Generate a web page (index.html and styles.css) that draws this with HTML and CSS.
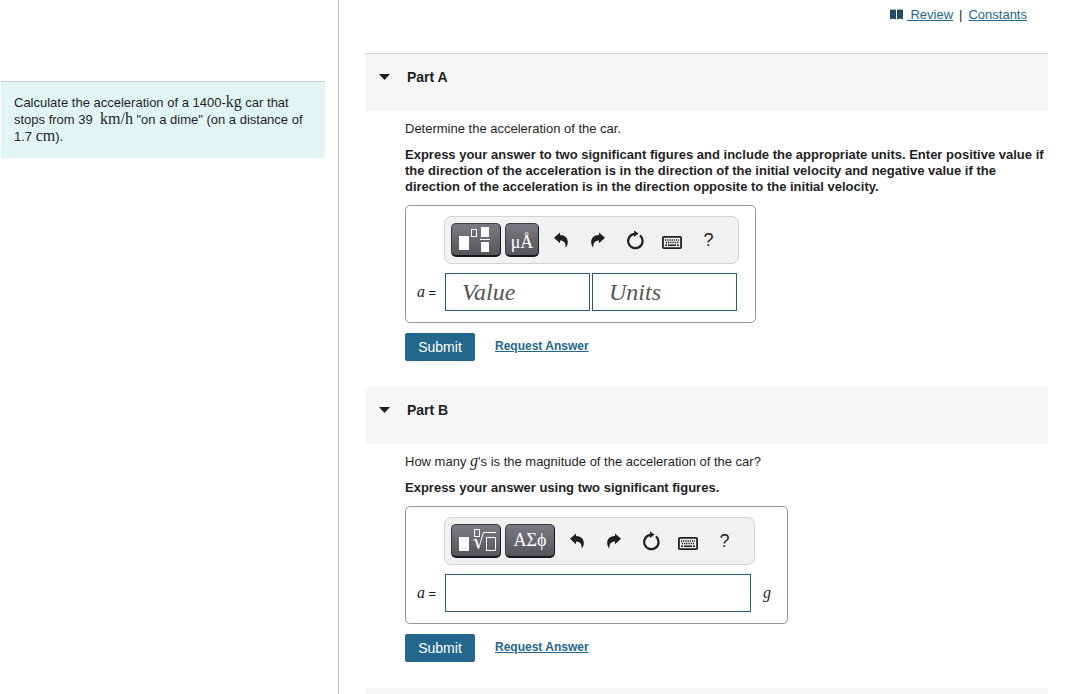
FILE: index.html
```html
<!DOCTYPE html>
<html lang="en">
<head>
    <meta charset="UTF-8">
    <meta name="viewport" content="width=device-width, initial-scale=1">
    <title>Acceleration of a Car</title>
    <link rel="stylesheet" href="styles.css">
</head>
<body>
    <!-- Shared toolbar icons -->
    <svg class="icon-defs" aria-hidden="true">
        <symbol id="icon-undo" viewBox="0 0 14 16">
            <path d="M0 5.8 L6 0.4 V3 C11 3.2 13.8 6 13.8 10 C13.8 12.4 13 14.2 11.6 15.8 C12 11.6 10.4 8.8 6 8.6 V11.2 Z"/>
        </symbol>
        <symbol id="icon-redo" viewBox="0 0 14 16">
            <path d="M14 5.8 L8 0.4 V3 C3 3.2 0.2 6 0.2 10 C0.2 12.4 1 14.2 2.4 15.8 C2 11.6 3.6 8.8 8 8.6 V11.2 Z"/>
        </symbol>
        <symbol id="icon-reset" viewBox="0 0 18 20">
            <path d="M14 5.4 A7.2 7.2 0 1 1 8.4 3.8" fill="none" stroke="currentColor" stroke-width="2.2"/>
            <path d="M8 0.4 L12.6 3.6 L8 7 Z"/>
        </symbol>
        <symbol id="icon-keyboard" viewBox="0 0 20 13">
            <rect x="0.9" y="0.9" width="18.2" height="11.2" rx="1" fill="none" stroke="currentColor" stroke-width="1.8"/>
            <path d="M3 4 H17 M3.8 6.5 H17" fill="none" stroke="currentColor" stroke-width="1.5" stroke-dasharray="1.3 0.9"/>
            <path d="M3 9.2 H5 M6 9.2 H14 M15 9.2 H17" fill="none" stroke="currentColor" stroke-width="1.5"/>
        </symbol>
    </svg>

    <div class="page">
        <aside class="sidebar">
            <div class="problem">Calculate the acceleration of a 1400-<span class="unit">kg</span> car that stops from 39 &nbsp;<span class="unit">km/h</span> "on a dime" (on a distance of 1.7 <span class="unit">cm</span>).</div>
        </aside>

        <main class="content">
            <nav class="top-links">
                <svg width="13" height="11" viewBox="0 0 13 11" aria-hidden="true">
                    <path d="M0 0.8 Q3.5 0 6 0.8 V10.4 Q3.5 9.4 0 10 Z M7 0.8 Q9.5 0 13 0.8 V10 Q9.5 9.4 7 10.4 Z" fill="#1b4f68"/>
                </svg>
                <a href="#review">&nbsp;Review</a>
                <span class="divider">|</span>
                <a href="#constants">Constants</a>
            </nav>

            <!-- Part A -->
            <section class="part">
                <header class="part-header first">
                    <button type="button" class="toggle" aria-label="Collapse Part A">
                        <svg width="11" height="6" viewBox="0 0 11 6"><path d="M0 0 H11 L5.5 6 Z"/></svg>
                    </button>
                    <h2>Part A</h2>
                </header>
                <form class="part-body">
                    <p>Determine the acceleration of the car.</p>
                    <p class="instructions">Express your answer to two significant figures and include the appropriate units. Enter positive value if the direction of the acceleration is in the direction of the initial velocity and negative value if the direction of the acceleration is in the direction opposite to the initial velocity.</p>

                    <div class="answer-box">
                        <div class="toolbar">
                            <button type="button" class="palette" aria-label="Templates">
                                <svg width="36" height="28" viewBox="0 0 36 28">
                                    <g fill="#fff">
                                        <rect x="1" y="10" width="10" height="14"/>
                                        <rect x="23" y="1" width="8" height="10"/>
                                        <rect x="22" y="13" width="10" height="1"/>
                                        <rect x="23" y="16" width="8" height="10"/>
                                    </g>
                                    <rect x="13.5" y="3.5" width="5" height="7" fill="none" stroke="#fff"/>
                                </svg>
                            </button>
                            <button type="button" class="palette small">μÅ</button>
                            <div class="tools">
                                <button type="button" aria-label="Undo"><svg width="14" height="16"><use href="#icon-undo"/></svg></button>
                                <button type="button" aria-label="Redo"><svg width="14" height="16"><use href="#icon-redo"/></svg></button>
                                <button type="button" aria-label="Reset"><svg width="18" height="20"><use href="#icon-reset"/></svg></button>
                                <button type="button" aria-label="Keyboard shortcuts"><svg class="low" width="20" height="13"><use href="#icon-keyboard"/></svg></button>
                                <button type="button">?</button>
                            </div>
                        </div>
                        <div class="answer-row">
                            <label for="value-a"><i>a</i> =</label>
                            <input type="text" id="value-a" class="half" placeholder="Value">
                            <input type="text" class="half" placeholder="Units" aria-label="Units">
                        </div>
                    </div>

                    <div class="actions">
                        <button type="submit" class="submit">Submit</button>
                        <a href="#answer-a">Request Answer</a>
                    </div>
                </form>
            </section>

            <!-- Part B -->
            <section class="part">
                <header class="part-header">
                    <button type="button" class="toggle" aria-label="Collapse Part B">
                        <svg width="11" height="6" viewBox="0 0 11 6"><path d="M0 0 H11 L5.5 6 Z"/></svg>
                    </button>
                    <h2>Part B</h2>
                </header>
                <form class="part-body">
                    <p>How many <i class="variable">g</i>'s is the magnitude of the acceleration of the car?</p>
                    <p class="instructions">Express your answer using two significant figures.</p>

                    <div class="answer-box">
                        <div class="toolbar">
                            <button type="button" class="palette" aria-label="Templates">
                                <svg width="40" height="28" viewBox="0 0 40 28">
                                    <rect x="3" y="10" width="10" height="14" fill="#fff"/>
                                    <g fill="none" stroke="#fff">
                                        <rect x="18.5" y="2.5" width="5" height="7"/>
                                        <path d="M17 13.5 L19.5 12 L22.5 21.5 L27.5 5.5 H40"/>
                                        <path d="M19.8 12.5 L22.5 21" stroke-width="2"/>
                                        <rect x="30.5" y="10.5" width="9" height="13"/>
                                    </g>
                                </svg>
                            </button>
                            <button type="button" class="palette">ΑΣϕ</button>
                            <div class="tools">
                                <button type="button" aria-label="Undo"><svg width="14" height="16"><use href="#icon-undo"/></svg></button>
                                <button type="button" aria-label="Redo"><svg width="14" height="16"><use href="#icon-redo"/></svg></button>
                                <button type="button" aria-label="Reset"><svg width="18" height="20"><use href="#icon-reset"/></svg></button>
                                <button type="button" aria-label="Keyboard shortcuts"><svg class="low" width="20" height="13"><use href="#icon-keyboard"/></svg></button>
                                <button type="button">?</button>
                            </div>
                        </div>
                        <div class="answer-row">
                            <label for="value-b"><i>a</i> =</label>
                            <input type="text" id="value-b" class="full">
                            <i class="suffix">g</i>
                        </div>
                    </div>

                    <div class="actions">
                        <button type="submit" class="submit">Submit</button>
                        <a href="#answer-b">Request Answer</a>
                    </div>
                </form>
            </section>

            <section class="part">
                <header class="part-header"></header>
            </section>
        </main>
    </div>
</body>
</html>
```
FILE: styles.css
```css
/* General styles */
* {
    box-sizing: border-box;
}

body {
    margin: 0;
    font-family: "Liberation Sans", Arial, sans-serif;
    font-size: 13px;
    line-height: 16px;
    color: #1f1f1f;
    background-color: #fff;
}

a {
    color: #24678d;
    text-decoration: underline;
}

button {
    margin: 0;
    padding: 0;
    border: none;
    background: none;
    font-family: inherit;
    color: inherit;
    cursor: pointer;
}

svg {
    display: block;
    fill: currentColor;
}

.icon-defs {
    display: none;
}

.page {
    display: flex;
    height: 100vh;
    overflow: hidden;
}

/* Problem statement */
.sidebar {
    flex: 0 0 339px;
    padding: 81px 13px 0 1px;
    border-right: 1px solid #b6bfcb;
}

.problem {
    padding: 12px 12px 13px 13px;
    border-top: 1px solid #c5d3d2;
    background-color: #e1f5f4;
    line-height: 17px;
}

.unit {
    font-family: "Liberation Serif", serif;
    font-size: 16px;
    line-height: 16px;
}

/* Main column */
.content {
    flex: 1;
    min-width: 0;
    padding: 0 26px;
}

.top-links {
    display: flex;
    justify-content: flex-end;
    align-items: center;
    height: 53px;
    padding: 0 21px 24px 0;
}

.top-links svg {
    margin-right: 4px;
}

.top-links .divider {
    margin: 0 6px;
}

/* Parts */
.part-header {
    display: flex;
    align-items: flex-start;
    min-height: 57px;
    padding: 15px 14px 26px;
    background-color: #f6f6f6;
}

.part-header.first {
    border-top: 1px solid #cfcfcf;
}

.part-header h2 {
    margin: 0;
    font-size: 14px;
    line-height: 16px;
}

.toggle {
    display: flex;
    align-items: center;
    width: 28px;
    height: 16px;
}

.part-body {
    padding: 10px 0 26px 40px;
}

.part-body p {
    margin: 0 0 10px;
}

.part-body .instructions {
    font-weight: bold;
}

.variable {
    font-family: "Liberation Serif", serif;
    font-size: 16px;
    line-height: 14px;
}

/* Answer box */
.answer-box {
    width: fit-content;
    padding: 10px 16px 11px 11px;
    border: 1px solid #959595;
    border-radius: 5px;
}

.toolbar {
    display: flex;
    align-items: center;
    width: fit-content;
    height: 48px;
    margin: 0 0 9px 27px;
    padding: 0 11px 0 6px;
    border: 1px solid #d3d3d3;
    border-radius: 7px;
    background-color: #f1f1f1;
}

.palette {
    display: flex;
    align-items: center;
    justify-content: center;
    width: 50px;
    height: 34px;
    border: 1px solid #3c3c40;
    border-right-color: #18181a;
    border-bottom: 2px solid #18181a;
    border-radius: 5px;
    background: linear-gradient(#7b7a82, #55555a);
    font-family: "Liberation Serif", serif;
    font-size: 18px;
    color: #fff;
}

.palette + .palette {
    margin-left: 4px;
}

.palette.small {
    width: 34px;
    padding-top: 6px;
}

.tools {
    display: flex;
    margin-left: 3px;
}

.tools button {
    display: flex;
    align-items: center;
    justify-content: center;
    width: 37px;
    height: 34px;
    font-size: 18px;
}

.tools .low {
    margin-top: 4px;
}

.answer-row {
    display: flex;
    align-items: center;
}

.answer-row label {
    width: 28px;
}

.answer-row label i,
.suffix {
    font-family: "Liberation Serif", serif;
    font-size: 16px;
}

.answer-row input {
    height: 38px;
    padding: 0 16px;
    border: 1px solid #2a5f7c;
    font-family: "Liberation Serif", serif;
    font-size: 24px;
    outline: none;
}

.answer-row input::placeholder {
    color: #555;
    font-style: italic;
}

.half {
    width: 145px;
}

.half + .half {
    margin-left: 2px;
}

.full {
    width: 306px;
}

.suffix {
    margin-left: 12px;
}

/* Submit row */
.actions {
    display: flex;
    align-items: center;
    gap: 20px;
    margin-top: 10px;
}

.actions a {
    padding-bottom: 2px;
    font-size: 12px;
    font-weight: bold;
}

.submit {
    width: 70px;
    height: 28px;
    border-radius: 2px;
    background-color: #24678d;
    font-size: 14px;
    color: #fff;
}

.submit:hover {
    background-color: #1b4f68;
}
```
